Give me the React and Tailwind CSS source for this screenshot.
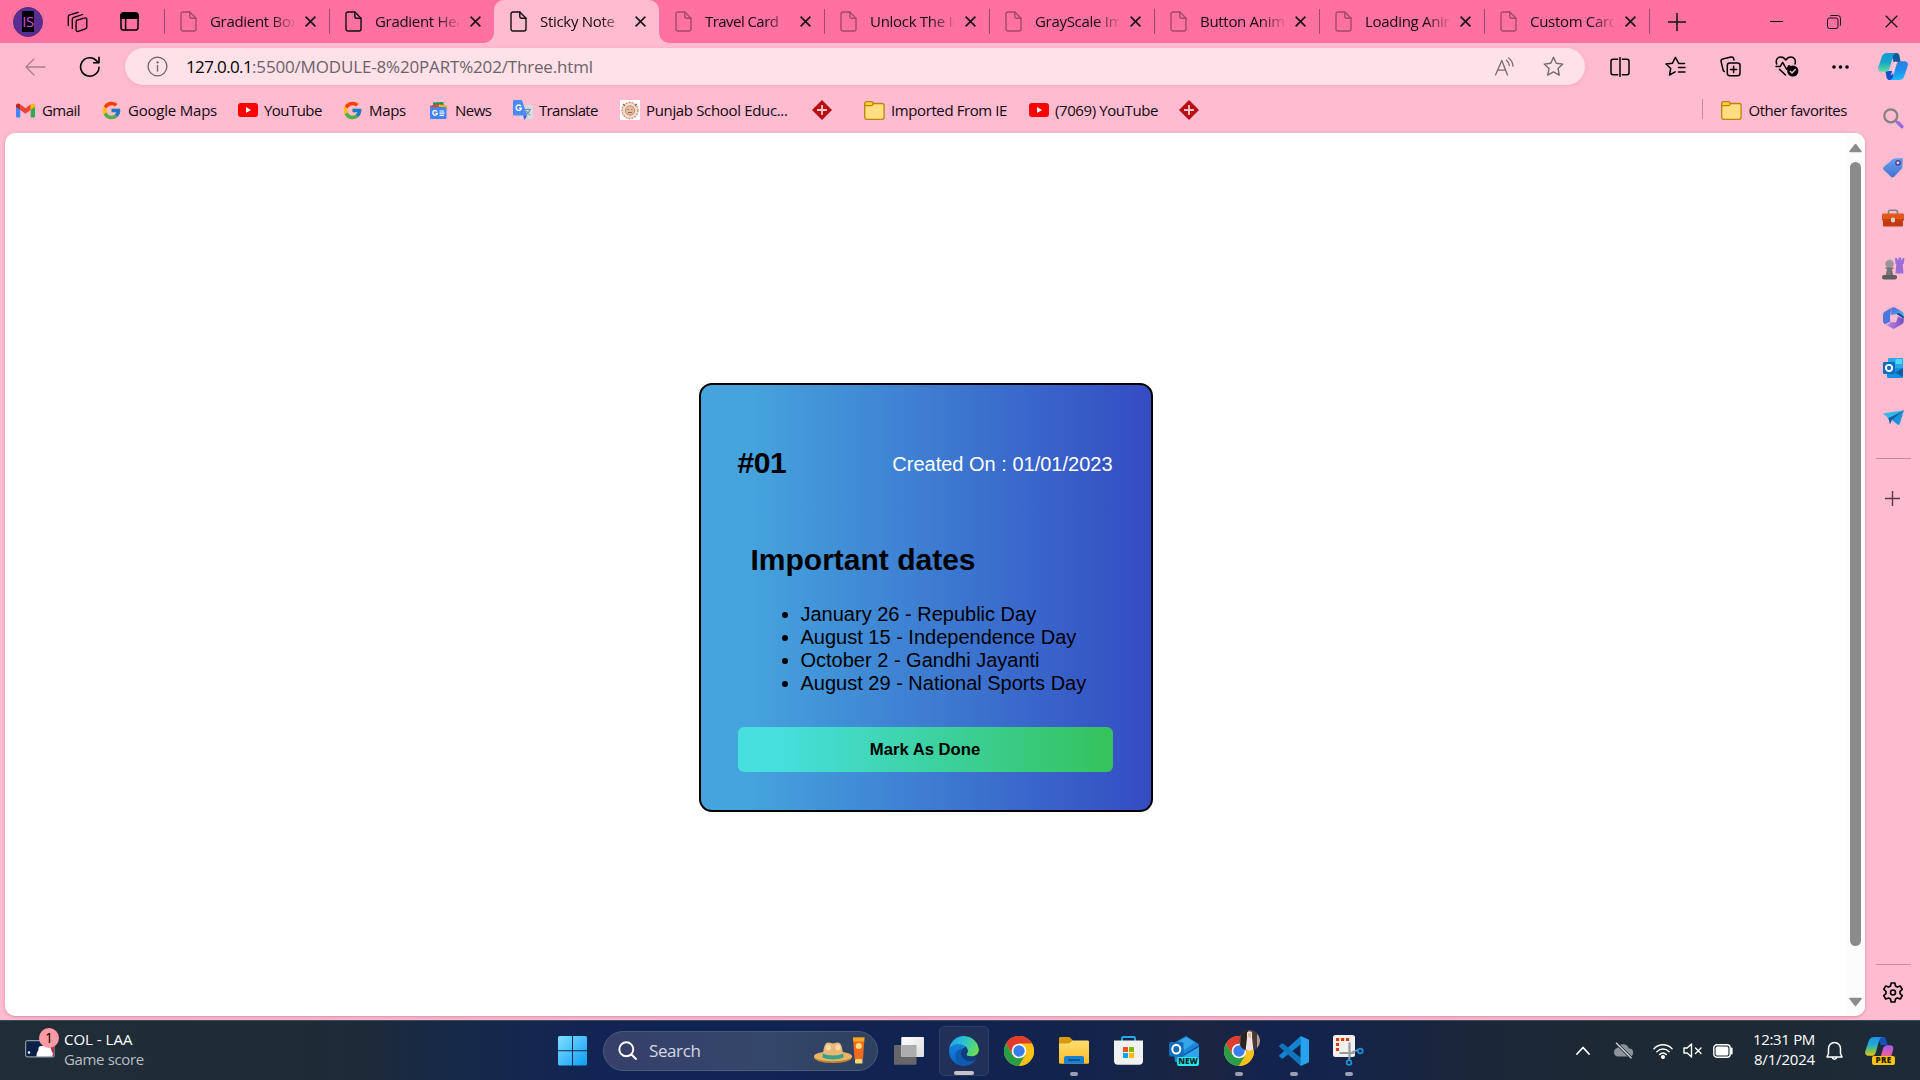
import React from 'react';
import { FcGoogle } from 'react-icons/fc';

/* ---------- small line icons ---------- */

function Line({ w = 20, h = 20, sw = 1.4, className = '', children }) {
  return (
    <svg width={w} height={h} viewBox={`0 0 ${w} ${h}`} fill="none" stroke="currentColor" strokeWidth={sw} strokeLinecap="round" strokeLinejoin="round" className={`shrink-0 ${className}`}>
      {children}
    </svg>
  );
}

const FileIcon = ({ className }) => (
  <Line w={17} h={21} sw={1.4} className={className}>
    <path d="M3 1h6.8l6.2 6.2V18a2 2 0 0 1-2 2H3a2 2 0 0 1-2-2V3a2 2 0 0 1 2-2z" />
    <path d="M9.8 1v4.2a2 2 0 0 0 2 2H16" />
  </Line>
);

const CloseIcon = ({ size = 11, sw = 1.5 }) => (
  <svg width={size} height={size} viewBox="0 0 11 11" className="shrink-0" stroke="#111" strokeWidth={sw}>
    <path d="M.6.6l9.8 9.8M10.4.6L.6 10.4" />
  </svg>
);

const Workspaces = () => (
  <Line w={22} h={22} sw={1.3}>
    <path d="M10.5 9.4l8.2-2.5a1.6 1.6 0 0 1 2.1 1.6v7.6c0 .8-.5 1.5-1.3 1.8l-7.3 2.5a1.6 1.6 0 0 1-2.1-1.500v-7.400c0-.9.1-1.800.4-2.100z" />
    <path d="M6.300 17.500V8.200c0-.9.6-1.600 1.400-1.900l9-2.800" />
    <path d="M2.300 14.500V5.800c0-.9.6-1.700 1.400-1.900l8.500-2.600" />
  </Line>
);

const TabActions = () => (
  <Line w={19} h={19} sw={1.5}>
    <rect x="1" y="1" width="17" height="17" rx="2.6" />
    <path d="M1 6.200V3.600A2.600 2.600 0 0 1 3.600 1h11.800A2.600 2.600 0 0 1 18 3.600v2.600z" fill="currentColor" />
    <path d="M5.600 6.500V18" />
  </Line>
);

const BackArrow = () => (
  <Line w={21} h={18} sw={1.3} className="text-[#a97f8d]">
    <path d="M20 9H1.200M9 1L1 9l8 8" />
  </Line>
);

const Reload = () => (
  <Line w={22} h={22} sw={1.6}>
    <path d="M20 11.200a9.200 9.200 0 1 1-2.300-6.300l1.600 1.600" />
    <path d="M20 1.400v5.400h-5.400" />
  </Line>
);

const InfoIcon = () => (
  <Line w={21} h={21} sw={1.3} className="text-[#6d6267]">
    <circle cx="10.500" cy="10.500" r="9.400" />
    <path d="M10.500 9.400v5.600" />
    <circle cx="10.500" cy="6.400" r=".5" fill="currentColor" />
  </Line>
);

const ReadAloud = () => (
  <Line w={21} h={20} sw={1.3} className="text-[#76696e]">
    <path d="M1.500 18L7.800 3.500 13.500 18M3.700 13.200h8" />
    <path d="M12.500 3.200c1.700 1.400 2.600 3.200 2.800 5.300M14.600 1c2.800 2 4.200 4.800 4.400 8.200" />
  </Line>
);

const Star = () => (
  <Line w={21} h={21} sw={1.4} className="text-[#76696e]">
    <path d="M10.500 1.300l2.800 6 6.500.8-4.800 4.500 1.300 6.500-5.800-3.200-5.800 3.200L6 12.600 1.200 8.100l6.500-.8z" />
  </Line>
);

const SplitScreen = () => (
  <Line w={20} h={20} sw={1.5}>
    <path d="M10 .6v18.800" />
    <path d="M7.600 2.300H3A2 2 0 0 0 1 4.300v11.400a2 2 0 0 0 2 2h4.600M12.400 2.300H17a2 2 0 0 1 2 2v11.400a2 2 0 0 1-2 2h-4.600" />
  </Line>
);

const Favorites = () => (
  <Line w={21} h={21} sw={1.5}>
    <path d="M19.500 7.500h-5.700L10.400 1.300 7.500 7.200 1 8l4.700 4.500L4.500 19l5.700-3.200" />
    <path d="M13.500 11.500h6.500M13.500 16h6.500" />
  </Line>
);

const Collections = () => (
  <Line w={21} h={21} sw={1.5}>
    <rect x="7.300" y="7" width="12.700" height="12.700" rx="2.400" />
    <path d="M13.600 10.200v6.400M10.400 13.400h6.400" />
    <path d="M4.300 15.600c-.8-.3-1-.8-1.200-1.600L1.100 5.600c-.3-1.300.3-2.300 1.500-2.600L11 1c1.300-.3 2.300.3 2.600 1.500l.4 1.600" />
  </Line>
);

const BrowserEssentials = () => (
  <Line w={24} h={21} sw={1.5}>
    <path d="M1.600 8C.4 3.800 2.600 1 5.800 1c2.300 0 3.800 1.100 5 3 1.200-1.900 2.700-3 5-3 3.200 0 5.400 2.800 4.200 7" />
    <path d="M1 10.500h4.200l2.500-4.200 4 7.200 2.300-3.800 1.200.8M4.500 13.400l6 5.600" />
    <circle cx="17.800" cy="15" r="5.600" fill="#000" stroke="none" />
    <path d="M15.300 15.200l1.700 1.700 3.300-3.500" stroke="#ffbbd0" strokeWidth="1.400" />
  </Line>
);

const Dots = () => (
  <svg width="17" height="4" viewBox="0 0 17 4" className="shrink-0">
    <circle cx="2" cy="2" r="1.800" />
    <circle cx="8.500" cy="2" r="1.800" />
    <circle cx="15" cy="2" r="1.800" />
  </svg>
);

const CopilotIcon = () => (
  <svg width="30" height="27" viewBox="0 0 30 27" className="shrink-0">
    <defs>
      <linearGradient id="cpa" x1="0" y1="0" x2="0" y2="1">
        <stop offset="0" stopColor="#0f9ad8" />
        <stop offset=".5" stopColor="#14a5c8" />
        <stop offset="1" stopColor="#5fe09a" />
      </linearGradient>
      <linearGradient id="cpb" x1="0" y1="0" x2="0" y2="1">
        <stop offset="0" stopColor="#2b7fe0" />
        <stop offset=".5" stopColor="#1e8ff0" />
        <stop offset="1" stopColor="#18bdf5" />
      </linearGradient>
    </defs>
    <path d="M13 0h5.500c1.600 0 2.500 1.200 2.900 2.600L22.600 9h-7z" fill="#0d5b9c" />
    <path d="M17 27h-5.500c-1.600 0-2.500-1.200-2.900-2.600L7.400 18h7z" fill="#1550d0" />
    <path d="M9 0h9c-1.800.3-2.600 1.700-3.100 3.400l-3.400 12c-.6 2-1.900 3.400-4.200 3.400H3.400C.8 18.800-.4 16.800.3 14.200L3.700 4C4.600 1.400 6.400 0 9 0z" fill="url(#cpa)" />
    <path d="M21 27h-9c1.800-.3 2.600-1.700 3.100-3.400l3.400-12c.6-2 1.900-3.400 4.200-3.400h3.900c2.600 0 3.800 2 3.100 4.600L26.300 23c-.9 2.600-2.700 4-5.300 4z" fill="url(#cpb)" />
    <path d="M14.200 18.600l2.700-9.200c.3-.9.800-1.300 1.700-1.200-.6.800-.9 1.600-1.200 2.500l-2.600 9c-.4 1.300-1 2.300-2 2.600z" fill="#ffe3ee" />
  </svg>
);

/* ---------- bookmark icons ---------- */

const Gmail = () => (
  <svg width="19" height="15" viewBox="0 0 19 15" className="shrink-0">
    <path d="M0 2.500l4.300 3.200V14.500H1.300A1.300 1.300 0 0 1 0 13.200z" fill="#4285f4" />
    <path d="M19 2.500l-4.300 3.200V14.500h3a1.300 1.300 0 0 0 1.300-1.300z" fill="#34a853" />
    <path d="M4.300 1.300L9.500 5.200l5.200-3.900v5.600L9.500 10.800 4.300 6.900z" fill="#ea4335" />
    <path d="M0 2.500C0 .4 2.300-.4 4.300 1.300v5.600L0 3.700z" fill="#c5221f" />
    <path d="M19 2.500c0-2.100-2.300-2.900-4.300-1.200v5.600L19 3.700z" fill="#fbbc04" />
  </svg>
);

const YouTube = () => (
  <svg width="20" height="14" viewBox="0 0 20 14" className="shrink-0">
    <rect width="20" height="14" rx="3" fill="#f00" />
    <path d="M8 4l5 3-5 3z" fill="#fff" />
  </svg>
);

const News = () => (
  <svg width="19" height="17" viewBox="0 0 19 17" className="shrink-0">
    <path d="M4 .5L14.500 0v6H4z" fill="#0c9d58" />
    <path d="M1 4l7-2 8 1v6H1z" fill="#ea4335" />
    <path d="M10 2.500l8.500 1.300L17 9h-7z" fill="#fbbc04" />
    <rect x="1" y="5" width="16.500" height="12" rx="1.300" fill="#4285f4" />
    <path d="M8 9.600a2.300 2.300 0 1 0 .3 1.700H6.300" stroke="#fff" strokeWidth="1.300" fill="none" />
    <path d="M10.500 9h4.500M10.500 11.200h5M10.500 13.400h4.500" stroke="#fff" strokeWidth="1.200" />
  </svg>
);

const Translate = () => (
  <svg width="20" height="20" viewBox="0 0 20 20" className="shrink-0">
    <rect x="7" y="5" width="13" height="14" rx="1.300" fill="#d5dbe3" />
    <path d="M12 9.500h6M15 8.200v1.300M17 9.500c-.6 2.300-2 4-4.200 5.200M13.300 11c.9 1.900 2.200 3.200 4 4" stroke="#6f8ea8" strokeWidth="1.100" fill="none" />
    <path d="M1.300 0h7.600l5.300 15.500H1.300A1.300 1.300 0 0 1 0 14.200V1.300A1.300 1.300 0 0 1 1.300 0z" fill="#4a8af4" />
    <path d="M10 15.500h4.200L11.500 20z" fill="#2f5fc4" />
    <path d="M8 6.200a2.700 2.700 0 1 0 .4 2H6" stroke="#fff" strokeWidth="1.300" fill="none" />
  </svg>
);

const School = () => (
  <svg width="20" height="20" viewBox="0 0 20 20" className="shrink-0">
    <rect width="20" height="20" fill="#fff" />
    <circle cx="10" cy="10.500" r="8" fill="#f3ddd0" stroke="#c88f72" strokeWidth="1.300" strokeDasharray="2 1" />
    <circle cx="10" cy="10.500" r="4.600" fill="#e4bda6" stroke="#bf8466" />
    <path d="M7.500 9.500h1.500M11 9.500h1.500M8 12.500h4M3 4l2 2M17 4l-2 2" stroke="#9d6248" strokeWidth="1.100" />
  </svg>
);

const Diamond = () => (
  <svg width="20" height="20" viewBox="0 0 20 20" className="shrink-0">
    <path d="M10 0l10 10-10 10L0 10z" fill="#b80f12" />
    <path d="M10 5v10M5 10h10" stroke="#f3c6cb" strokeWidth="1.800" />
  </svg>
);

const Folder = () => (
  <svg width="21" height="19" viewBox="0 0 21 19" className="shrink-0">
    <rect x=".7" y="2.500" width="19.400" height="15.800" rx="2" fill="#ffdd80" stroke="#b8860b" strokeWidth="1.300" />
    <path d="M.7 4.500V2.700a2 2 0 0 1 2-2h4.600c1 0 1.800.9 1.800 2 0 1-.8 1.900-1.800 1.900z" fill="#ffcf33" stroke="#b8860b" strokeWidth="1.300" />
  </svg>
);

/* ---------- sidebar icons ---------- */

const SideSearch = () => (
  <svg width="21" height="21" viewBox="0 0 21 21">
    <circle cx="7.800" cy="7.800" r="6.500" fill="none" stroke="#858085" strokeWidth="2.200" />
    <path d="M12.800 12.800l2 2" stroke="#858085" strokeWidth="2.400" />
    <path d="M15.200 14.800l3.600 3.800" stroke="#9a6be0" strokeWidth="3.600" strokeLinecap="round" />
  </svg>
);

const SideTag = () => (
  <svg width="20" height="20" viewBox="0 0 20 20">
    <defs>
      <linearGradient id="tag" x1="0" y1="0" x2="0" y2="1">
        <stop offset="0" stopColor="#6aa0f0" />
        <stop offset="1" stopColor="#3f74cf" />
      </linearGradient>
    </defs>
    <path d="M11.500.6L18 0a1.700 1.700 0 0 1 1.900 1.900l-.6 7.300a3 3 0 0 1-.9 1.800l-7.300 7.700a2.200 2.200 0 0 1-3.100.1L.8 12a2.200 2.200 0 0 1 0-3.100l8.500-7.400a3 3 0 0 1 2.200-.9z" fill="url(#tag)" />
    <circle cx="15" cy="4.800" r="2.200" fill="#ffbbd0" stroke="#3b3f9a" strokeWidth="1.300" />
  </svg>
);

const SideTools = () => (
  <svg width="22" height="18" viewBox="0 0 22 18">
    <path d="M6.500 5V3A1.800 1.800 0 0 1 8.300 1.200h5.400A1.800 1.800 0 0 1 15.500 3v2" fill="none" stroke="#858085" strokeWidth="1.600" />
    <rect x="1" y="9" width="20" height="8.500" rx="1.300" fill="#c33a10" />
    <rect x="0" y="4.500" width="22" height="7" rx="1.300" fill="#e4571b" />
    <path d="M0 10.800h22" stroke="#b5330d" />
    <rect x="9" y="8.500" width="4" height="5" rx="1.800" fill="#d8d4d2" />
  </svg>
);

const SideGames = () => (
  <svg width="23" height="23" viewBox="0 0 23 23">
    <path d="M13 1h2v1.500h1.500V.5h2.500v2h1.500V1h2l-.8 6h-1l.8 9.500h-8L14.300 7h-.8z" fill="#9c6fd8" />
    <circle cx="7.500" cy="7" r="4.200" fill="#9a979a" />
    <path d="M3.500 10.500h8V12H10l1.300 6.500H3.700L5 12H3.500z" fill="#777477" />
    <rect x="0" y="18" width="15" height="4.500" rx="2" fill="#5f5c5f" />
  </svg>
);

const SideM365 = () => (
  <svg width="21" height="22" viewBox="0 0 21 22">
    <defs>
      <linearGradient id="m1" x1="0" y1="0" x2="1" y2="1">
        <stop offset="0" stopColor="#5a5fd8" />
        <stop offset="1" stopColor="#3cc8f5" />
      </linearGradient>
      <linearGradient id="m2" x1="0" y1="0" x2="1" y2="0">
        <stop offset="0" stopColor="#c08aec" />
        <stop offset="1" stopColor="#7450c4" />
      </linearGradient>
    </defs>
    <path d="M8.500.8a4 4 0 0 1 4 0l6.500 3.700a3.500 3.500 0 0 1 1.800 3v4L13.500 7 8 9.500z" fill="url(#m1)" />
    <path d="M13.500 7l7.300 4.500V9.500l-5-3.500z" fill="#22407f" />
    <path d="M8.500.8L2 4.500a4 4 0 0 0-2 3.400v6.300a3.500 3.500 0 0 0 2 3l5-2.500.5-8.500z" fill="#4a76dd" />
    <path d="M20.800 11.500V14a4 4 0 0 1-1.900 3.300l-6.400 3.800a4 4 0 0 1-4 0L2 17.300c3 .8 4.500-.5 5.500-2.300l5.500.5 2-6z" fill="url(#m2)" />
    <circle cx="10.400" cy="11" r="3.400" fill="#ffbbd0" />
  </svg>
);

const SideOutlook = () => (
  <svg width="20" height="20" viewBox="0 0 20 20">
    <rect x="5" y="0" width="15" height="13" rx="1" fill="#28a8ea" />
    <path d="M12.500 1H19v5h-6.500z" fill="#50d9ff" />
    <path d="M4 10l16 0v8.800a1.200 1.200 0 0 1-1.200 1.200H5.200A1.200 1.200 0 0 1 4 18.800z" fill="#1490df" />
    <path d="M20 10v9l-8-4.500z" fill="#0b5ea8" />
    <rect x="0" y="4" width="12" height="12" rx="1.300" fill="#0f6cbd" />
    <circle cx="6" cy="10" r="3.100" fill="none" stroke="#fff" strokeWidth="1.900" />
  </svg>
);

const SidePlane = () => (
  <svg width="21" height="16" viewBox="0 0 21 16">
    <path d="M0 3.500L21 .3 5.500 8.500z" fill="#30b8ea" />
    <path d="M21 .3L7 8.200l7.500 6.300c1 .8 1.800.4 2.200-.7z" fill="#1a93dd" />
    <path d="M5.300 8.300L21 .3 9 9.800l-2 4.400z" fill="#0c5ea6" />
  </svg>
);

const Gear = () => (
  <Line w={22} h={22} sw={1.6}>
    <path d="M9.100 1h3.800l.6 3 1.900 1.100 2.900-1.100 2 3.300-2.300 2v2.400l2.300 2-2 3.300-2.900-1.100-1.900 1.100-.6 3H9.100l-.6-3-1.900-1.100-2.900 1.100-2-3.300 2.300-2V9.300l-2.300-2 2-3.300 2.900 1.100L8.500 4z" />
    <circle cx="11" cy="10.500" r="2.500" />
  </Line>
);

/* ---------- taskbar icons ---------- */

const StartIcon = () => (
  <svg width="30" height="30" viewBox="0 0 30 30" className="shrink-0">
    <defs>
      <linearGradient id="win" x1="0" y1="0" x2="1" y2="1">
        <stop offset="0" stopColor="#7fe0ff" />
        <stop offset="1" stopColor="#0f9bf5" />
      </linearGradient>
    </defs>
    <path d="M1.500 0H14v14.200H0V1.500A1.500 1.500 0 0 1 1.500 0zM15 0h12.500A1.500 1.500 0 0 1 29 1.500v12.700H15zM0 15.200h14V29.500H1.500A1.500 1.500 0 0 1 0 28zM15 15.200h14V28a1.500 1.500 0 0 1-1.500 1.500H15z" fill="url(#win)" />
  </svg>
);

const Hat = () => (
  <svg width="51" height="28" viewBox="0 0 51 28" className="shrink-0">
    <ellipse cx="19" cy="20.500" rx="19" ry="5.500" fill="#c08339" />
    <ellipse cx="19" cy="19.300" rx="19" ry="5" fill="#eab664" />
    <path d="M9 18C9.500 10 11 5.500 14.500 5.500c2 0 3 1 4.500 1s2.500-1 4.500-1C27 5.500 28.500 10 29 18c-3 3-17 3-20 0z" fill="#e8b878" />
    <ellipse cx="14.500" cy="10.500" rx="2.500" ry="3" fill="#f8d9a4" />
    <ellipse cx="24" cy="10.500" rx="2.500" ry="3" fill="#f8d9a4" />
    <path d="M8.800 16.500c4 2.600 16.400 2.600 20.400 0l.4 4c-5 2.500-16.200 2.500-21.200 0z" fill="#35a38b" />
    <path d="M39 .5h11.500L49 22h-8.500z" fill="#f06a20" />
    <path d="M39 .5h11.500l-.4 4H39.400z" fill="#f9a825" />
    <circle cx="44.800" cy="9" r="3" fill="#ffe27a" />
    <rect x="41" y="22" width="7.500" height="4.500" rx="1" fill="#f7d774" />
  </svg>
);

const TaskView = () => (
  <svg width="30" height="28" viewBox="0 0 30 28" className="shrink-0">
    <defs>
      <linearGradient id="tv" x1="0" y1="0" x2="1" y2="1">
        <stop offset="0" stopColor="#fff" />
        <stop offset="1" stopColor="#dcdcdc" />
      </linearGradient>
    </defs>
    <rect x="0" y="8" width="22.500" height="19.800" rx="1" fill="#67676a" />
    <rect x="7.300" y="0" width="22.700" height="20" rx="1" fill="url(#tv)" />
    <rect x="7.300" y="8" width="15.200" height="12" fill="#adadaf" />
  </svg>
);

const EdgeIcon = () => (
  <svg width="30" height="30" viewBox="0 0 30 30">
    <defs>
      <linearGradient id="e1" x1="0" y1=".3" x2="1" y2=".6">
        <stop offset="0" stopColor="#1ca6e6" />
        <stop offset=".5" stopColor="#2fc4c9" />
        <stop offset="1" stopColor="#6be04a" />
      </linearGradient>
      <linearGradient id="e2" x1="0" y1="0" x2="0" y2="1">
        <stop offset="0" stopColor="#1a8fe3" />
        <stop offset="1" stopColor="#0b63c4" />
      </linearGradient>
      <clipPath id="e3"><circle cx="15" cy="15" r="15" /></clipPath>
    </defs>
    <g clipPath="url(#e3)">
      <path d="M0 0h16v30H0z" fill="url(#e2)" />
      <path d="M.2 13C1.200 5 7.500 0 15 0c8.500 0 15 6 15 13.300 0 4.500-3.500 7.200-7.600 7.200-3.200 0-5-.9-5-2 0-.8 1.300-1.300 1.300-3.500C18.700 11 14.500 8 9.800 8 5 8 1.500 10.300.2 13z" fill="url(#e1)" />
      <path d="M12.500 13c-2.600 6 1.600 11.800 8.200 11.800 3 0 5.300-.8 7-1.800C25 27.200 20.500 30 15.300 30 9 29.500 5.500 24 6.500 18.500c.6-3 3.300-5.300 6-5.500z" fill="#0d5cb0" />
      <path d="M17.400 18.500c0-.8 1.300-1.300 1.300-3.500 0-2-1.200-3.200-2.700-3.200-3 0-4.600 3.200-4 6.600 1 4.600 5.500 7 10 6.300 2.500-.3 4.500-1.200 6.200-2.600.5-.8.4-1.300-.2-1.600-1.500.5-3.500.3-5.600 0-3.200 0-5-.9-5-2z" fill="#123c7c" />
    </g>
  </svg>
);

const ChromeIcon = () => (
  <svg width="30" height="30" viewBox="0 0 30 30">
    <circle cx="15" cy="15" r="15" fill="#fbc116" />
    <path d="M15 7.500h13a15 15 0 0 0-26 0l6.500 11.200z" fill="#e33b2e" />
    <path d="M2 7.500A15 15 0 0 0 15 30l6.500-11.200L15 15l-6.500 3.800z" fill="#2a9d48" />
    <path d="M15 30l6.500-11.200a7.500 7.500 0 0 0 0-7.500L28 7.500A15 15 0 0 1 15 30z" fill="#fbc116" />
    <circle cx="15" cy="15" r="7.300" fill="#fff" />
    <circle cx="15" cy="15" r="5.700" fill="#3b7ded" />
  </svg>
);

const Avatar = () => (
  <svg width="21" height="21" viewBox="0 0 21 21" className="rounded-full">
    <rect width="21" height="21" fill="#6b5e5b" />
    <path d="M2 0h7l-1 21H1z" fill="#2b2321" />
    <path d="M13 0h5v21h-4z" fill="#463a37" />
    <path d="M8 2.500c1-1.500 4-1.500 5 0V8l1.500 13H6.500L8 8z" fill="#f2e4df" />
    <path d="M9 3h3v4.500H9z" fill="#e0b8a8" />
    <path d="M18 4l3 4v8l-3 2z" fill="#b49c94" />
  </svg>
);

const Explorer = () => (
  <svg width="30" height="28" viewBox="0 0 30 28">
    <defs>
      <linearGradient id="fx" x1="0" y1="0" x2="0" y2="1">
        <stop offset="0" stopColor="#ffdf70" />
        <stop offset="1" stopColor="#fcbb26" />
      </linearGradient>
    </defs>
    <path d="M1.300 0h8.200c.8 0 1.300.3 1.800.8L14 3.500 11 8H0V1.300A1.300 1.300 0 0 1 1.300 0z" fill="#d99a0c" />
    <path d="M13.500 3.500h15.200A1.300 1.300 0 0 1 30 4.800V25.500a1.300 1.300 0 0 1-1.300 1.300H1.300A1.300 1.300 0 0 1 0 25.500V6.500h9c1 0 2-.4 2.700-1.200z" fill="url(#fx)" />
    <path d="M5 26.800V21a2 2 0 0 1 2-2h16a2 2 0 0 1 2 2v5.800z" fill="#1681d0" />
    <path d="M9.500 23h11" stroke="#0b4a86" strokeWidth="1.500" strokeLinecap="round" />
  </svg>
);

const Store = () => (
  <svg width="29" height="29" viewBox="0 0 29 29">
    <path d="M8 5V2.300A1.300 1.300 0 0 1 9.300 1h10.400A1.300 1.300 0 0 1 21 2.300V5" fill="none" stroke="#27a9e6" strokeWidth="1.900" />
    <path d="M0 4.500h29v20.300a4 4 0 0 1-4 4H4a4 4 0 0 1-4-4z" fill="#f1f1f1" />
    <path d="M9 11h5v5H9z" fill="#f05022" />
    <path d="M15 11h5v5h-5z" fill="#7fba00" />
    <path d="M9 17h5v5H9z" fill="#00a4ef" />
    <path d="M15 17h5v5h-5z" fill="#ffb900" />
  </svg>
);

const OutlookNew = () => (
  <svg width="30" height="29" viewBox="0 0 30 29">
    <path d="M4 7.500L17 0l12 7.500a2 2 0 0 1 1 1.700V26H6z" fill="#1a86d9" />
    <path d="M8 6.500L17 1l9 5.500L15 14z" fill="#35a6e8" />
    <path d="M30 9v9L15 26 9 22z" fill="#0d55a5" />
    <path d="M11 22l19-11v9l-8 6z" fill="#2fa5ec" />
    <rect x="0" y="6" width="14.500" height="14.500" rx="1.500" fill="#0f6cbd" />
    <ellipse cx="7.300" cy="13.200" rx="4" ry="4.300" fill="none" stroke="#fff" strokeWidth="2.100" />
  </svg>
);

const VSCode = () => (
  <svg width="30" height="30" viewBox="0 0 30 30">
    <path d="M21.800 0v8.300L4 22.500l-1.300.1L.4 20.500a.9.900 0 0 1 0-1.300z" fill="#1483d2" />
    <path d="M21.800 30v-8.300L4 7.500l-1.300-.1L.4 9.500a.9.900 0 0 0 0 1.300z" fill="#1174bd" />
    <path d="M21.500 0l7.600 3.200a1.500 1.500 0 0 1 .9 1.300v21a1.500 1.500 0 0 1-.9 1.300L21.500 30z" fill="#27a3ee" />
  </svg>
);

const Snip = () => (
  <svg width="31" height="31" viewBox="0 0 31 31">
    <rect x="0" y="0" width="22" height="22" rx="2.500" fill="#f3f1f0" />
    <path d="M3 4.500h3.200M8 4.500h3.200M13 4.500h3.200M4.500 8v3M4.500 13v3" stroke="#d83b01" strokeWidth="3" />
    <path d="M16.500 7.500v15M6.500 18h15" stroke="#9b9b9b" strokeWidth="2.200" />
    <path d="M19 17l6-2M17 19.500L16 25" stroke="#8ea3b5" strokeWidth="1.800" />
    <circle cx="27.300" cy="16" r="2.400" fill="none" stroke="#1e90d8" strokeWidth="1.700" />
    <circle cx="16" cy="27.500" r="2.400" fill="none" stroke="#1e90d8" strokeWidth="1.700" />
  </svg>
);

const CopilotPre = () => (
  <svg width="30" height="28" viewBox="0 0 30 28">
    <defs>
      <linearGradient id="pa" x1="0" y1="0" x2="0" y2="1">
        <stop offset="0" stopColor="#1f8ff0" />
        <stop offset=".4" stopColor="#1fa9d0" />
        <stop offset=".75" stopColor="#7cc252" />
        <stop offset="1" stopColor="#f2c21a" />
      </linearGradient>
      <linearGradient id="pb" x1="0" y1="0" x2="0" y2="1">
        <stop offset="0" stopColor="#a05af0" />
        <stop offset=".5" stopColor="#e05bb0" />
        <stop offset="1" stopColor="#f5804a" />
      </linearGradient>
    </defs>
    <path d="M13 0h5c1.800 0 2.700 1.200 3.100 2.600L22.600 8h-7z" fill="#1552b8" />
    <path d="M9 0h8c-1.500.5-2.300 1.700-2.800 3.400l-3.400 12c-.6 2-1.900 3.400-4.200 3.400H3.400c-2.600 0-3.800-2-3.100-4.600L3.700 4C4.600 1.400 6.400 0 9 0z" fill="url(#pa)" />
    <path d="M21 24h-8c1.500-1 2-2 2.500-3.400l2.500-9c.6-2 1.900-3.400 4.200-3.400h3c2.600 0 3.600 2 2.900 4.600L26 20z" fill="url(#pb)" />
  </svg>
);

/* ---------- browser window ---------- */

const TABS = [
  { title: 'Gradient Box' },
  { title: 'Gradient Hea', dark: true },
  { title: 'Sticky Note', active: true, dark: true },
  { title: 'Travel Card', first: true },
  { title: 'Unlock The Im' },
  { title: 'GrayScale Im' },
  { title: 'Button Anim' },
  { title: 'Loading Anim' },
  { title: 'Custom Card' },
];

function Tab({ title, active, dark, first }) {
  return (
    <div className={`relative flex h-[43px] w-[165px] shrink-0 items-center ${active ? 'z-10 rounded-t-[10px] bg-[#ffbbd0]' : ''}`}>
      {!active && !first && <span className="absolute left-0 top-[9px] h-[25px] w-px bg-[#a04a69]" />}
      {active && (
        <>
          <span className="absolute -left-[10px] bottom-0 size-[10px] bg-[radial-gradient(circle_at_0_0,transparent_9.5px,#ffbbd0_10px)]" />
          <span className="absolute -right-[10px] bottom-0 size-[10px] bg-[radial-gradient(circle_at_100%_0,transparent_9.5px,#ffbbd0_10px)]" />
        </>
      )}
      <span className={`ml-4 ${dark ? 'text-[#111]' : 'text-[#a34a68]'}`}>
        <FileIcon />
      </span>
      <span className={`ml-[13px] w-[84px] overflow-hidden whitespace-nowrap text-[15px] text-[#160a0e] [mask-image:linear-gradient(to_right,#000_60px,#0002_84px)] ${first ? 'tracking-[-0.55px]' : 'tracking-[-0.3px]'}`}>
        {title}
      </span>
      <span className="ml-[11px]">
        <CloseIcon />
      </span>
    </div>
  );
}

function TitleBar() {
  return (
    <div className="flex h-[43px] items-center bg-[#ff71a0] text-black">
      <div className="ml-[13px] flex size-[30px] items-center justify-center rounded-full border border-[#43307c] bg-[#5c2d91]">
        <span className="flex h-[21px] w-[12px] items-center justify-center bg-black text-[15px] tracking-[-0.5px] text-[#d84be0]">IS</span>
      </div>
      <div className="ml-[23px]">
        <Workspaces />
      </div>
      <div className="ml-[32px]">
        <TabActions />
      </div>
      <div className="ml-[25px] flex">
        {TABS.map((t) => (
          <Tab key={t.title} {...t} />
        ))}
      </div>
      <span className="h-[25px] w-px bg-[#a04a69]" />
      <svg width="18" height="18" viewBox="0 0 18 18" className="ml-[18px]" stroke="#111" strokeWidth="1.500">
        <path d="M9 0v18M0 9h18" />
      </svg>
      <div className="ml-auto flex items-center">
        <span className="h-px w-[13px] bg-black" />
        <svg width="14" height="14" viewBox="0 0 14 14" fill="none" stroke="#111" className="ml-[44px]">
          <rect x=".5" y="3" width="10.500" height="10.500" rx="2" />
          <path d="M3 .9c.3-.3.700-.4 1.200-.4h6.300a3 3 0 0 1 3 3v6.300c0 .5-.1.900-.4 1.200" />
        </svg>
        <span className="ml-[44px] mr-[22px]">
          <CloseIcon size={13} sw={1} />
        </span>
      </div>
    </div>
  );
}

function Toolbar() {
  return (
    <div className="flex h-[47px] items-center">
      <div className="ml-[25px]"><BackArrow /></div>
      <div className="ml-[33px]"><Reload /></div>
      <div className="ml-6 flex h-[37px] w-[1460px] items-center rounded-full bg-[#ffe1ea] shadow-[0_1px_4px_#e58fae55]">
        <span className="ml-[22px]"><InfoIcon /></span>
        <span className="ml-[18px] whitespace-nowrap text-[17px] text-[#6d6267]">
          <span className="tracking-[-0.63px] text-black">127.0.0.1</span>
          <span className="tracking-[-0.17px]">:5500/MODULE-8%20PART%202/Three.html</span>
        </span>
        <span className="ml-auto"><ReadAloud /></span>
        <span className="ml-[28px] mr-[21px]"><Star /></span>
      </div>
      <div className="ml-[25px]"><SplitScreen /></div>
      <div className="ml-[35px]"><Favorites /></div>
      <div className="ml-[34px]"><Collections /></div>
      <div className="ml-[34px]"><BrowserEssentials /></div>
      <div className="ml-[33px]"><Dots /></div>
      <div className="ml-[29px]"><CopilotIcon /></div>
    </div>
  );
}

const BOOKMARKS = [
  { icon: <Gmail />, w: 'w-[86px]', label: 'Gmail', t: 'tracking-[-0.55px]' },
  { icon: <FcGoogle size={21} />, w: 'w-[136px]', label: 'Google Maps', t: 'tracking-[-0.21px]' },
  { icon: <YouTube />, w: 'w-[105px]', label: 'YouTube', t: 'tracking-[-0.55px]' },
  { icon: <FcGoogle size={21} />, w: 'w-[86px]', label: 'Maps', t: 'tracking-[-0.3px]' },
  { icon: <News />, w: 'w-[84px]', label: 'News', t: 'tracking-[-0.5px]' },
  { icon: <Translate />, w: 'w-[107px]', label: 'Translate', t: 'tracking-[-0.7px]' },
  { icon: <School />, w: 'w-[192px]', label: 'Punjab School Educ...', t: 'tracking-[-0.34px]' },
  { icon: <Diamond />, w: 'w-[53px]' },
  { icon: <Folder />, w: 'w-[164px]', label: 'Imported From IE', t: 'tracking-[-0.4px]' },
  { icon: <YouTube />, w: 'w-[151px]', label: '(7069) YouTube', t: 'tracking-[-0.41px]' },
  { icon: <Diamond />, w: 'w-[20px]' },
];

function BookmarkBar() {
  return (
    <div className="flex h-[43px] items-center pb-[3px] pl-[15px] text-[15px] text-[#14080c]">
      {BOOKMARKS.map((b, i) => (
        <div key={i} className={`flex shrink-0 items-center whitespace-nowrap ${b.w}`}>
          <span className="mr-[6px] flex w-[21px] justify-center">{b.icon}</span>
          <span className={b.t}>{b.label}</span>
        </div>
      ))}
      <div className="ml-auto mr-[18px] flex items-center">
        <span className="mb-[3px] h-5 w-px bg-[#c98ba0]" />
        <span className="ml-[18px] mr-[7px]"><Folder /></span>
        <span className="tracking-[-0.46px]">Other favorites</span>
      </div>
    </div>
  );
}

const DATES = [
  'January 26 - Republic Day',
  'August 15 - Independence Day',
  'October 2 - Gandhi Jayanti',
  'August 29 - National Sports Day',
];

function StickyNote() {
  return (
    <div className="flex h-[429px] w-[454px] flex-col rounded-[13px] border-2 border-black bg-[linear-gradient(90deg,#45a3dd_11.2%,#344cc2_100.2%)] pl-[37px] pr-[38px] font-['Liberation_Sans'] text-black">
      <div className="mt-[59px] flex h-[37px] items-center justify-between">
        <h1 className="text-[30px] font-bold leading-none tracking-[-0.4px]">#01</h1>
        <p className="mt-[2px] text-[20px] leading-none text-white">Created On : 01/01/2023</p>
      </div>
      <h2 className="ml-[13px] mt-[61px] text-[30px] font-bold leading-[36px]">Important dates</h2>
      <ul className="ml-[63px] mt-[25px] list-disc whitespace-nowrap text-[20px] leading-[23px]">
        {DATES.map((d) => (
          <li key={d}>{d}</li>
        ))}
      </ul>
      <button className="mt-[32px] h-[45px] rounded-[6px] bg-[linear-gradient(90deg,#45dfdd_11.2%,#34c25b_100.2%)] text-[16.67px] font-bold">
        Mark As Done
      </button>
    </div>
  );
}

function Page() {
  return (
    <div className="flex h-[883px] w-[1860px] overflow-hidden rounded-[10px] bg-white shadow-[0_1px_3px_#b0607d88]">
      <div className="flex flex-1 justify-center pt-[250px]">
        <StickyNote />
      </div>
      <div className="flex w-[19px] flex-col items-center bg-[#fcfcfc] pr-px">
        <svg width="13" height="10" viewBox="0 0 13 10" className="mt-[10px]">
          <path d="M6.500 1.500L12 8.500H1z" fill="#8b8b8b" stroke="#8b8b8b" strokeWidth="1.500" strokeLinejoin="round" />
        </svg>
        <div className="mt-[9px] h-[784px] w-[11px] rounded-full bg-[#8b8b8b]" />
        <svg width="13" height="10" viewBox="0 0 13 10" className="mt-[51px]">
          <path d="M6.500 8.500L12 1.500H1z" fill="#8b8b8b" stroke="#8b8b8b" strokeWidth="1.500" strokeLinejoin="round" />
        </svg>
      </div>
    </div>
  );
}

const SIDEBAR = [SideSearch, SideTag, SideTools, SideGames, SideM365, SideOutlook, SidePlane];

function Sidebar() {
  return (
    <div className="flex w-[55px] flex-col items-center pl-px pt-[3px]">
      {SIDEBAR.map((Icon, i) => (
        <div key={i} className="flex h-[50px] shrink-0 items-center justify-center">
          <Icon />
        </div>
      ))}
      <span className="mt-[15px] h-px w-[35px] bg-[#c98ba0]" />
      <svg width="15" height="15" viewBox="0 0 15 15" className="mr-[2px] mt-[32px]" stroke="#5a3b46" strokeWidth="1.400">
        <path d="M7.500 0v15M0 7.500h15" />
      </svg>
      <span className="mb-[17px] mt-auto h-px w-[35px] bg-[#c98ba0]" />
      <span className="mb-[16px]"><Gear /></span>
    </div>
  );
}

/* ---------- taskbar ---------- */

const APPS = [
  { icon: <ChromeIcon /> },
  { icon: <Explorer />, open: true },
  { icon: <Store /> },
  { icon: <OutlookNew />, badge: 'new' },
  { icon: <ChromeIcon />, badge: 'avatar', open: true },
  { icon: <VSCode />, open: true },
  { icon: <Snip />, open: true },
];

function Taskbar() {
  return (
    <div className="flex h-[60px] items-center border-t border-[#3e4a55] bg-[linear-gradient(90deg,#1f2d38_0%,#1f2c37_15%,#1d2a38_19%,#15294a_24%,#112554_31%,#102351_50%,#14244a_58%,#1b2540_63%,#12234e_66%,#14244a_70%,#1b263a_76%,#1d2933_85%,#1d2b38_100%)] text-white">
      <div className="relative ml-[25px] h-[60px] w-[31px]">
        <svg width="30" height="18" viewBox="0 0 30 18" className="mt-[19px]">
          <rect x=".6" y=".6" width="28.500" height="16.300" rx="2" fill="#0c1f49" stroke="#8b969f" strokeWidth="1.200" />
          <path d="M23 1.200h5.500v15.100H23z" fill="#c8203f" />
          <path d="M11.500 16.500c0-3.500.8-5 2-6.500-.5-2 .5-4 2.500-4h9c1 3 2 6 3 8l-1 2.500z" fill="#fff" />
          <circle cx="4" cy="12.500" r="1.200" fill="#fff" />
        </svg>
        <span className="absolute left-[14px] top-[7px] flex size-5 items-center justify-center rounded-full bg-[#ff99a4] text-[14px] text-black">1</span>
      </div>
      <div className="ml-[8px] w-[120px] pb-1 text-[15px] leading-5">
        <div>COL - LAA</div>
        <div className="tracking-[-0.35px] text-[#b9bfc4]">Game score</div>
      </div>
      <div className="ml-[374px]"><StartIcon /></div>
      <div className="ml-[15px] flex h-[40px] w-[275px] items-center rounded-full border border-[#4b5a7a] bg-[linear-gradient(90deg,#36406a,#34466a_60%,#2f4160)]">
        <svg width="20" height="20" viewBox="0 0 20 20" fill="none" stroke="#fff" strokeWidth="1.900" strokeLinecap="round" className="ml-[14px]">
          <circle cx="8.300" cy="8.300" r="7" />
          <path d="M13.500 13.500l4.500 4.500" />
        </svg>
        <span className="ml-[11px] text-[17px] tracking-[-0.4px] text-[#d3d9e3]">Search</span>
        <span className="ml-auto mr-[12px]"><Hat /></span>
      </div>
      <div className="ml-[16px]"><TaskView /></div>
      <div className="relative ml-[15px] flex size-[50px] items-center justify-center rounded-[5px] border border-[#2f3e66] bg-[#213059]">
        <EdgeIcon />
        <span className="absolute bottom-0 h-1 w-5 rounded-full bg-[#c4c4c8]" />
      </div>
      <div className="ml-[2px] flex">
        {APPS.map((a, i) => (
          <div key={i} className="relative flex h-[50px] w-[55px] items-center justify-center">
            {a.icon}
            {a.open && <span className="absolute bottom-0 h-1 w-2 rounded-full bg-[#9aa1b5]" />}
            {a.badge === 'new' && (
              <span className="absolute bottom-[10px] left-[21px] flex h-[9px] w-[22px] items-center justify-center rounded-[2px] bg-[#2ee6e6] text-[8px] font-extrabold text-[#08282f]">NEW</span>
            )}
            {a.badge === 'avatar' && (
              <span className="absolute left-[28px] top-[4px]"><Avatar /></span>
            )}
          </div>
        ))}
      </div>
      <div className="ml-auto flex items-center">
        <Line w={14} h={9} sw={1.8}><path d="M1 8l6-6.500L13 8" /></Line>
        <svg width="21" height="17" viewBox="0 0 21 17" className="ml-[23px]">
          <path d="M5 14.500a4.300 4.300 0 0 1-.5-8.500 6 6 0 0 1 11.300.5A4 4 0 0 1 16.500 14.500z" fill="#8c949b" />
          <path d="M3 .8l15.500 15.500" stroke="#1e2a34" strokeWidth="3" />
          <path d="M3 .8l15.500 15.500" stroke="#cfd3d6" strokeWidth="1.400" />
        </svg>
        <Line w={20} h={16} sw={1.5} className="ml-[19px]">
          <path d="M1 5.700c5-5.200 13-5.200 18 0M3.900 8.700c3.400-3.500 8.800-3.500 12.200 0M6.700 11.500c1.900-1.900 4.700-1.900 6.600 0" />
          <circle cx="10" cy="14" r="1.300" fill="currentColor" />
        </Line>
        <Line w={20} h={15} sw={1.4} className="ml-[10px]">
          <path d="M1 5v5h3.200L8.500 14V1L4.200 5zM12.500 5l5.500 5.500M18 5l-5.500 5.500" />
        </Line>
        <svg width="21" height="14" viewBox="0 0 21 14" className="ml-[10px]">
          <rect x=".8" y=".8" width="16.400" height="12.400" rx="3" fill="none" stroke="#fff" strokeWidth="1.400" />
          <rect x="2.600" y="2.600" width="12.800" height="8.800" rx="1.500" fill="#fff" />
          <path d="M18.600 4.500v5" stroke="#fff" strokeWidth="2" strokeLinecap="round" />
        </svg>
        <div className="ml-[18px] w-[63px] whitespace-nowrap pb-1 text-right text-[15px] leading-5">
          <div className="tracking-[-0.33px]">12:31 PM</div>
          <div className="tracking-[-0.18px]">8/1/2024</div>
        </div>
        <Line w={17} h={20} sw={1.5} className="ml-[11px]">
          <path d="M2.500 12.500V7.500a6 6 0 0 1 12 0v5l1.500 3.500H1zM6.300 16.500a2.300 2.300 0 0 0 4.400 0" />
        </Line>
        <div className="relative ml-[22px] mr-[25px] h-[28px] w-[30px]">
          <CopilotPre />
          <span className="absolute bottom-0 left-[7px] flex h-[9px] w-[23px] items-center justify-center rounded-[2px] bg-[#ffc20e] text-[8px] font-extrabold tracking-[0.4px] text-[#231a00]">PRE</span>
        </div>
      </div>
    </div>
  );
}

export default function App() {
  return (
    <div className="flex h-[1080px] w-[1920px] flex-col overflow-hidden bg-[#ffbbd0] font-['Open_Sans','Noto_Sans',sans-serif]">
      <TitleBar />
      <Toolbar />
      <div className="flex h-[930px]">
        <div className="flex w-[1865px] flex-col">
          <BookmarkBar />
          <div className="pl-[5px]">
            <Page />
          </div>
        </div>
        <Sidebar />
      </div>
      <Taskbar />
    </div>
  );
}
